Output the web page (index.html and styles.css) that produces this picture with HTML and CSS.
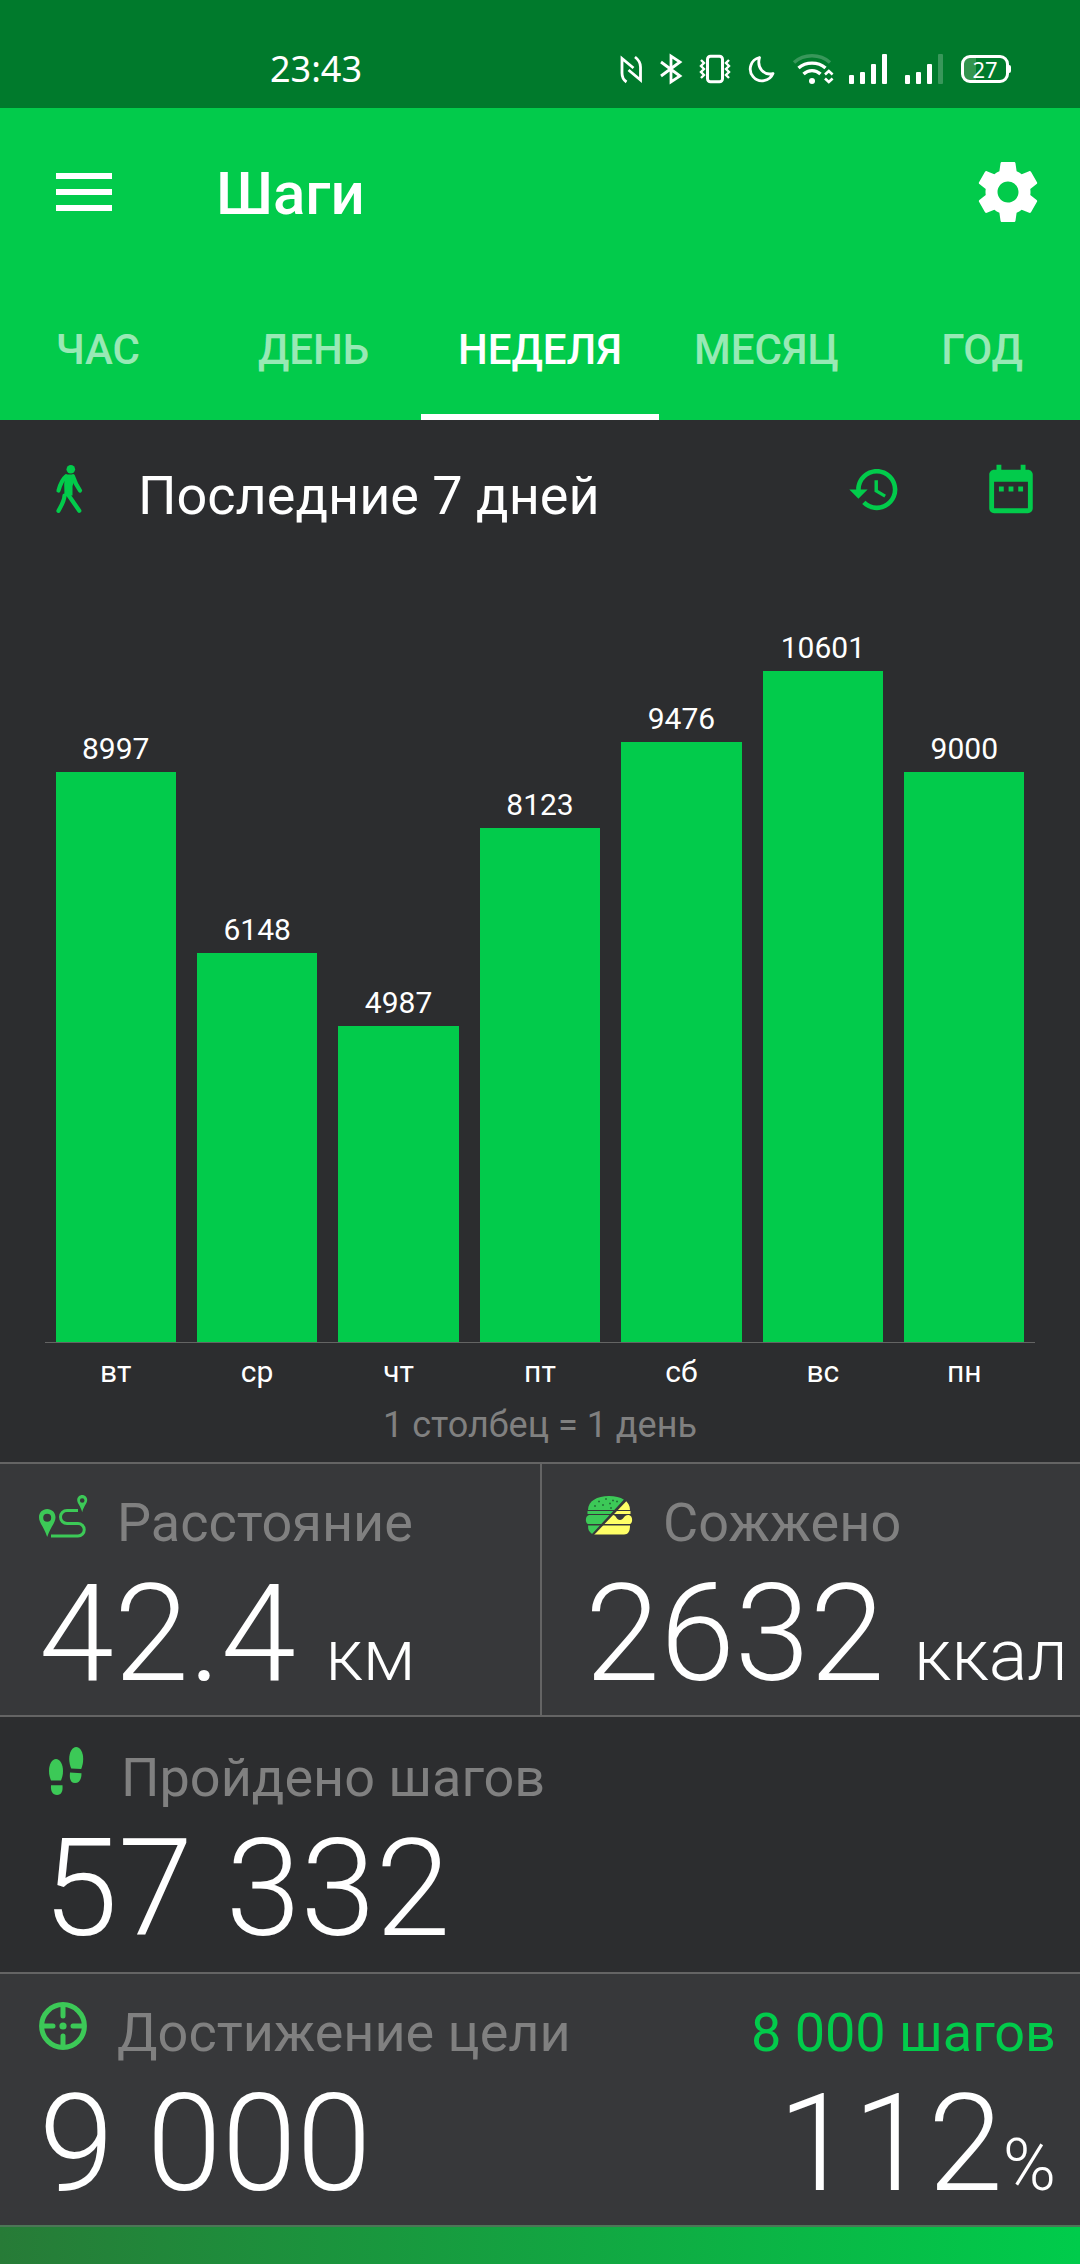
FILE: index.html
```
<!DOCTYPE html>
<html lang="ru">
<head>
    <meta charset="UTF-8">
    <meta name="viewport" content="width=device-width, initial-scale=1.0">
    <title>Шаги</title>
    <link rel="stylesheet" href="styles.css">
</head>
<body>
    <div class="status-bar">
        <span class="clock">23:43</span>
        <div class="status-icons">
            <!-- NFC -->
            <svg width="22" height="30" viewBox="0 0 22 30" fill="none" stroke="#fff" stroke-width="2.8">
                <path d="M7.500 28C4.500 26 3 23 3 19V4.500L14.500 14"/>
                <path d="M16 3c4 3 5.500 6 5.500 10v13L9.500 16"/>
            </svg>
            <!-- Bluetooth -->
            <svg width="22" height="30" viewBox="0 0 22 30" fill="none" stroke="#fff" stroke-width="2.8">
                <path d="M2 8l19 14-9 6V2l9 6L2 22"/>
            </svg>
            <!-- вибрация -->
            <svg width="32" height="30" viewBox="0 0 32 30" fill="none" stroke="#fff" stroke-width="3">
                <rect x="8.500" y="2.300" width="15" height="25.400" rx="3"/>
                <path d="M2 6l3 3-3 3 3 3-3 3 3 3-3 3M30 6l-3 3 3 3-3 3 3 3-3 3 3 3" stroke-width="2.400"/>
            </svg>
            <svg width="26" height="30" viewBox="0 0 26 30" fill="none" stroke="#fff" stroke-width="2.8" stroke-linejoin="round">
                <path d="M10.500 3.500a11.800 11.800 0 1 0 13.500 16C15 22 7.500 14 10.500 3.500z"/>
            </svg>
            <!-- Wi-Fi -->
            <svg width="38" height="30" viewBox="0 0 38 30" fill="none" stroke="#fff" stroke-width="3.400">
                <path d="M1 8.500C11-.5 27-.5 37 8.500" opacity=".22"/>
                <path d="M5.500 14c7.500-6.500 19.500-6.500 27 0"/>
                <path d="M10.500 20c5-4.500 12-4.500 17 0"/>
                <circle cx="19" cy="27" r="3" fill="#fff" stroke="none"/>
                <path d="M32 20.500l3.800-3.500 3.800 3.500M32 24.500l3.800 3.500 3.800-3.500" stroke-width="2.600"/>
            </svg>
            <svg width="38" height="30" viewBox="0 0 38 30" fill="#fff">
                <rect x="0" y="21" width="5" height="9" rx="1"/>
                <rect x="11" y="18" width="5" height="12" rx="1"/>
                <rect x="22" y="10" width="5" height="20" rx="1"/>
                <rect x="33" y="0" width="5" height="30" rx="1"/>
            </svg>
            <svg width="38" height="30" viewBox="0 0 38 30" fill="#fff">
                <rect x="0" y="21" width="5" height="9" rx="1"/>
                <rect x="11" y="18" width="5" height="12" rx="1"/>
                <rect x="22" y="10" width="5" height="20" rx="1"/>
                <rect x="33" y="0" width="5" height="30" rx="1" opacity=".22"/>
            </svg>
            <span class="battery">27</span>
        </div>
    </div>

    <header class="header">
        <div class="toolbar">
            <button type="button" class="icon-button" aria-label="Меню">
                <svg width="56" height="38" viewBox="0 0 56 38" fill="#fff">
                    <path d="M0 0h56v6H0zM0 16h56v6H0zM0 32h56v6H0z"/>
                </svg>
            </button>
            <h1>Шаги</h1>
            <button type="button" class="icon-button" aria-label="Настройки">
                <svg width="72" height="72" viewBox="0 0 24 24" fill="#fff">
                    <path d="M19.430 12.980c.04-.32.07-.64.07-.98s-.03-.66-.07-.98l2.110-1.650c.19-.15.24-.42.12-.64l-2-3.460c-.12-.22-.39-.3-.61-.22l-2.490 1c-.52-.4-1.080-.73-1.690-.98l-.38-2.650C14.460 2.180 14.250 2 14 2h-4c-.25 0-.46.18-.49.42l-.38 2.650c-.61.25-1.170.59-1.690.98l-2.490-1c-.23-.09-.49 0-.61.22l-2 3.460c-.13.22-.07.49.12.64l2.110 1.650c-.04.32-.07.65-.07.98s.03.66.07.98l-2.110 1.650c-.19.15-.24.42-.12.64l2 3.460c.12.22.39.3.61.22l2.490-1c.52.4 1.080.73 1.690.98l.38 2.650c.03.24.24.42.49.42h4c.25 0 .46-.18.49-.42l.38-2.650c.61-.25 1.170-.59 1.690-.98l2.490 1c.23.09.49 0 .61-.22l2-3.460c.12-.22.07-.49-.12-.64l-2.110-1.650zM12 15.500c-1.930 0-3.500-1.570-3.500-3.500s1.570-3.500 3.500-3.500 3.500 1.570 3.500 3.500-1.570 3.500-3.500 3.500z"/>
                </svg>
            </button>
        </div>
        <nav class="tabs">
            <button type="button">ЧАС</button>
            <button type="button">ДЕНЬ</button>
            <button type="button" class="active">НЕДЕЛЯ</button>
            <button type="button">МЕСЯЦ</button>
            <button type="button">ГОД</button>
        </nav>
    </header>

    <main>
        <section class="chart">
            <div class="chart-header">
                <svg class="walk" width="26" height="48" viewBox="0 0 26 48" fill="none" stroke="#02cb4b" stroke-width="4.200" stroke-linecap="round" stroke-linejoin="round">
                    <circle cx="14.800" cy="4.200" r="4.300" fill="#02cb4b" stroke="none"/>
                    <path d="M9 9.500h9l1 5-2.500 6.500v9.500H8.500l-.3-11z" fill="#02cb4b" stroke="none"/>
                    <path d="M10 11.500c-4 3-5.500 7-7.500 14M17 11.500c2 6 4 10 7 14"/>
                    <path d="M11 28l12.300 17.800M8.500 30.500c0 5-2 8-6 15.300"/>
                </svg>
                <h2>Последние 7 дней</h2>
                <button type="button" class="icon-button" aria-label="История">
                    <svg width="55" height="55" viewBox="0 0 24 24" fill="#02cb4b">
                        <path d="M13 3c-4.970 0-9 4.030-9 9H1l3.890 3.890.07.14L9 12H6c0-3.870 3.130-7 7-7s7 3.130 7 7-3.130 7-7 7c-1.930 0-3.680-.79-4.940-2.060l-1.420 1.420C8.270 19.990 10.510 21 13 21c4.970 0 9-4.030 9-9s-4.030-9-9-9zm-1 5v5l4.280 2.540.72-1.210-3.500-2.080V8H12z"/>
                    </svg>
                </button>
                <button type="button" class="icon-button" aria-label="Календарь">
                    <svg width="58" height="58" viewBox="0 0 24 24" fill="#02cb4b">
                        <path d="M9 11H7v2h2v-2zm4 0h-2v2h2v-2zm4 0h-2v2h2v-2zm2-7h-1V2h-2v2H8V2H6v2H5c-1.110 0-1.990.9-1.990 2L3 20c0 1.100.89 2 2 2h14c1.100 0 2-.9 2-2V6c0-1.100-.9-2-2-2zm0 16H5V9h14v11z"/>
                    </svg>
                </button>
            </div>
            <ul class="bars">
                <li><span>8997</span><div class="bar" style="--steps: 8997"></div></li>
                <li><span>6148</span><div class="bar" style="--steps: 6148"></div></li>
                <li><span>4987</span><div class="bar" style="--steps: 4987"></div></li>
                <li><span>8123</span><div class="bar" style="--steps: 8123"></div></li>
                <li><span>9476</span><div class="bar" style="--steps: 9476"></div></li>
                <li><span>10601</span><div class="bar" style="--steps: 10601"></div></li>
                <li><span>9000</span><div class="bar" style="--steps: 9000"></div></li>
            </ul>
            <ul class="days">
                <li>вт</li>
                <li>ср</li>
                <li>чт</li>
                <li>пт</li>
                <li>сб</li>
                <li>вс</li>
                <li>пн</li>
            </ul>
            <p class="caption">1 столбец = 1 день</p>
        </section>

        <div class="row">
            <section class="stat">
                <div class="stat-label">
                    <svg width="48" height="48" viewBox="0 0 48 48" fill="#3cc957">
                        <path fill-rule="evenodd" d="M8.200 17C3.600 17 0 20.600 0 25.200 0 31 5 35 8.200 45c3.200-10 8.300-14 8.300-19.800C16.500 20.600 12.800 17 8.200 17zm0 4.700a4 4 0 1 1 0 8 4 4 0 0 1 0-8z"/>
                        <path fill-rule="evenodd" d="M43.200 3C40.400 3 38.200 5.200 38.200 8c0 3.500 3.500 6 5 12.300C44.700 14 48.200 11.500 48.200 8c0-2.800-2.200-5-5-5zm0 3.200a2.300 2.300 0 1 1 0 4.600 2.300 2.300 0 0 1 0-4.600z"/>
                        <path d="M39 18.500H28a6.500 6.500 0 0 0 0 13h11a6.200 6.200 0 0 1 0 12.500H12" fill="none" stroke="#3cc957" stroke-width="3"/>
                    </svg>
                    <h3>Расстояние</h3>
                </div>
                <p class="value">42.4<small> км</small></p>
            </section>
            <section class="stat">
                <div class="stat-label">
                    <svg width="48" height="48" viewBox="0 0 48 48">
                        <defs>
                            <clipPath id="eaten"><path d="M0 0h39v7.500L7 42l-3-3-4-3z"/></clipPath>
                            <clipPath id="left"><path d="M48 4l-6 4.500L9 43h39z"/></clipPath>
                            <g id="burger">
                                <path d="M3 18C3 9 12 4 24 4s21 5 21 14z"/>
                                <path d="M2.500 19h43v3h-43z"/>
                                <path d="M4 23h40c4 1 4 8 1 9H3c-3-1-3-8 1-9z"/>
                                <path d="M3 33.500h42c0 6-2 9-6 9H9c-4 0-6-3-6-9z"/>
                            </g>
                        </defs>
                        <use href="#burger" fill="#3cc957" clip-path="url(#eaten)"/>
                        <use href="#burger" fill="#ffff66" clip-path="url(#left)"/>
                        <path d="M28 23c3 0 3.500 5 7 5s4-5 8-5z" fill="#37383a"/>
                        <path d="M13 9.500h2M20 7h2M27 8.500h2M9 14h2M17 13h2M24 11.500h2M31 9.500h2M25 16h2" stroke="#23733a" stroke-width="1.500"/>
                    </svg>
                    <h3>Сожжено</h3>
                </div>
                <p class="value">2632<small> ккал</small></p>
            </section>
        </div>

        <section class="stat steps">
            <div class="stat-label">
                <svg width="48" height="48" viewBox="0 0 48 48" fill="#3cc957">
                    <path d="M13 12c4 0 7 5 7 12 0 4-1 7-2 9.500H8C7 31 6 28 6 24c0-7 3-12 7-12z"/>
                    <path d="M8 38.300h11.500c.5 6-1 9.700-5.500 9.700s-6.500-3.700-6-9.700z"/>
                    <path d="M33.200 0c4 0 7 5 7 12 0 4-1 7.500-2 10l-10-.5c-1-2.500-2-5.500-2-9.500 0-7 3-12 7-12z"/>
                    <path d="M27 25.500l11.500.8c0 6-2 9.700-6.500 9.700s-5.700-4-5-10.500z"/>
                </svg>
                <h3>Пройдено шагов</h3>
            </div>
            <p class="value">57 332</p>
        </section>

        <section class="goal">
            <div class="stat">
                <div class="stat-label">
                    <svg width="48" height="48" viewBox="0 0 48 48" fill="none" stroke="#3cc957" stroke-width="5">
                        <circle cx="24" cy="24" r="21.400"/>
                        <path d="M24 5v9M24 34v9M5 24h9M34 24h9" stroke-linecap="round"/>
                        <circle cx="24" cy="24" r="3.600" fill="#3cc957" stroke="none"/>
                    </svg>
                    <h3>Достижение цели</h3>
                </div>
                <p class="value">9 000</p>
            </div>
            <div class="target">
                <p class="target-steps">8 000 шагов</p>
                <p class="value">112<small>%</small></p>
            </div>
        </section>
        <div class="progress"></div>
    </main>
</body>
</html>
```

FILE: styles.css
```
* {
    box-sizing: border-box;
}

body {
    font-family: Roboto, "Liberation Sans", sans-serif;
    background: #2c2d2f;
    color: #fff;
    margin: 0;
    min-height: 100vh;
    display: flex;
    flex-direction: column;
}

h1, h2, h3, p, ul {
    margin: 0;
    padding: 0;
    font-weight: 400;
}

ul {
    list-style: none;
}

svg {
    display: block;
    flex: none;
    overflow: visible;
}

button {
    font-family: inherit;
    color: inherit;
    background: none;
    border: none;
    padding: 0;
    cursor: pointer;
}

/* системная строка */
.status-bar {
    display: flex;
    align-items: center;
    justify-content: space-between;
    height: 108px;
    padding: 30px 71px 0 270px;
    background: #007a2c;
}

.clock {
    font-family: "Noto Sans", sans-serif;
    font-size: 36px;
    line-height: 44px;
}

.status-icons {
    display: flex;
    align-items: center;
    gap: 18px;
}

.battery {
    position: relative;
    width: 48px;
    height: 28px;
    border: 3px solid #fff;
    border-radius: 9px;
    background: linear-gradient(to right, #33954f 12px, transparent 12px);
    font-family: "Noto Sans", sans-serif;
    font-size: 22px;
    line-height: 22px;
    text-align: center;
}

.battery::after {
    content: "";
    position: absolute;
    top: 7px;
    right: -5px;
    width: 3px;
    height: 8px;
    border-radius: 0 2px 2px 0;
    background: #fff;
}

/* шапка */
.header {
    background: #02cb4b;
    overflow: hidden;
}

.toolbar {
    display: flex;
    align-items: center;
    height: 168px;
    padding: 0 36px 0 56px;
}

.toolbar h1 {
    flex: 1;
    padding: 4px 0 0 104px;
    font-size: 60px;
    font-weight: 500;
    line-height: 70px;
}

.tabs {
    display: grid;
    grid-template-columns: 1fr 1fr 1.1fr 1fr 1fr;
    margin: 0 -10px;
}

.tabs button {
    height: 144px;
    padding-top: 8px;
    border-bottom: 6px solid transparent;
    color: rgba(255, 255, 255, 0.6);
    font-size: 42px;
    font-weight: 500;
}

.tabs .active {
    color: #fff;
    border-color: #fff;
}

/* график */
.chart {
    padding: 34px 45px 15px;
}

.chart-header {
    display: flex;
    align-items: center;
    height: 70px;
    padding: 0 0 0 11px;
}

.chart-header h2 {
    flex: 1;
    padding: 14px 0 0 56px;
    font-size: 54px;
    line-height: 64px;
}

.chart-header .icon-button {
    margin-left: 80px;
}

.chart-header .icon-button:last-child {
    margin-right: -5px;
}

.bars, .days {
    display: grid;
    grid-template-columns: repeat(7, 1fr);
    font-size: 30px;
    line-height: 36px;
    text-align: center;
}

.bars {
    height: 819px;
    border-bottom: 1px solid #646464;
}

.bars li {
    display: flex;
    flex-direction: column;
    justify-content: flex-end;
    height: 818px;
}

.bars span {
    margin-bottom: 5px;
}

.bar {
    flex: none;
    width: 85%;
    height: calc(var(--steps) / 12920 * 100%);
    margin: 0 auto;
    background: #02cb4b;
}

.days {
    padding-top: 11px;
}

.caption {
    margin-top: 13px;
    color: #808080;
    font-size: 36px;
    line-height: 44px;
    text-align: center;
}

/* показатели */
.row {
    display: grid;
    grid-template-columns: 1fr 1fr;
    border-top: 2px solid #646464;
    background: #37383a;
}

.row .stat + .stat {
    padding-left: 43px;
    border-left: 2px solid #646464;
}

.stat {
    padding: 27px 0 13px 39px;
    white-space: nowrap;
}

.stat-label {
    display: flex;
    gap: 30px;
}

.stat-label svg {
    margin-top: 1px;
}

.stat h3, .target-steps {
    font-size: 54px;
    line-height: 64px;
}

.stat h3 {
    color: #808080;
}

.value {
    margin-top: 11px;
    font-size: 135px;
    font-weight: 300;
    line-height: 136px;
}

.value small {
    font-size: 72px;
    line-height: 72px;
}

.row small {
    margin-left: 12px;
}

.steps {
    padding: 29px 0 15px 43px;
    border-top: 2px solid #646464;
}

.goal {
    display: flex;
    justify-content: space-between;
    border-top: 2px solid #646464;
    background: #37383a;
}

.target {
    padding: 27px 24px 13px 0;
    text-align: right;
}

.target-steps {
    color: #02cb4b;
}

.progress {
    height: 39px;
    border-top: 2px solid #4d7657;
    background: linear-gradient(to right, #277b37, #00cc4b);
    background-clip: padding-box;
}
```
